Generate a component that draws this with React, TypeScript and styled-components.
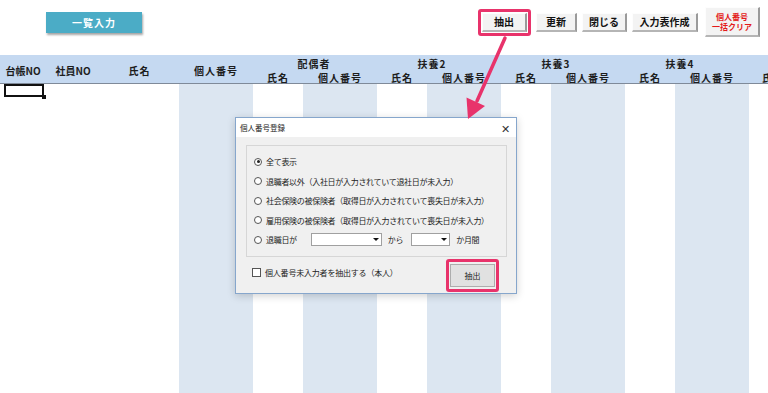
import React from 'react'
import styled, { createGlobalStyle } from 'styled-components'

const GlobalStyle = createGlobalStyle`
  html, body {
    margin: 0;
    padding: 0;
    background: #ffffff;
  }
  body {
    font-family: 'Noto Sans CJK JP', 'Noto Sans', sans-serif;
    color: #222;
  }
`

const PINK = '#e8336b'
const COLS = [46, 54, 79, 74, 50, 74, 50, 74, 50, 74, 50, 74, 19]
const SHADED = [3, 5, 7, 9, 11]
const GROUPS = [
  { label: '配偶者', shift: 2 },
  { label: '扶養2', shift: 14 },
  { label: '扶養3', shift: 14 },
  { label: '扶養4', shift: 14 },
]

const Sheet = styled.div`
  position: relative;
  width: 768px;
  height: 393px;
  overflow: hidden;
  background: #fff;
  display: flex;
  flex-direction: column;
`

const TopBar = styled.div`
  height: 55px;
  display: flex;
  align-items: flex-start;
  padding: 0 8px 0 46px;
  box-sizing: border-box;
`

const TealButton = styled.div`
  margin-top: 12px;
  width: 96px;
  height: 21px;
  background: #4bacc6;
  box-shadow: 1px 2px 2px rgba(0, 0, 0, 0.35);
  color: #fff;
  font-size: 10px;
  font-weight: 700;
  display: flex;
  align-items: center;
  justify-content: center;
  letter-spacing: 1px;
`

const ButtonGroup = styled.div`
  margin-left: auto;
  margin-top: 7px;
  height: 30px;
  display: flex;
  align-items: center;
  gap: 5px;
`

const Highlight = styled.div<{ $px: number; $py: number }>`
  border: 3px solid ${PINK};
  border-radius: 3px;
  padding: ${(p) => p.$py}px ${(p) => p.$px}px;
  display: flex;
`

const FormButton = styled.div<{ $w: number; $h?: number; $red?: boolean }>`
  width: ${(p) => p.$w}px;
  height: ${(p) => p.$h || 19}px;
  box-sizing: border-box;
  background: #f3f3f3;
  border-right: 2px solid #9a9a9a;
  border-bottom: 2px solid #b5b5b5;
  border-top: 1px solid #fdfdfd;
  border-left: 1px solid #fdfdfd;
  color: ${(p) => (p.$red ? '#e31b1b' : '#111')};
  font-size: ${(p) => (p.$red ? 8 : 10)}px;
  font-weight: 700;
  line-height: ${(p) => (p.$red ? 1.2 : 1)};
  display: flex;
  flex-direction: column;
  align-items: center;
  justify-content: center;
  text-align: center;
  white-space: nowrap;
`

const ClearButton = styled(FormButton)`
  margin-left: 2px;
`

const Header = styled.div`
  height: 28px;
  background: #c5d9f1;
  border-bottom: 1px solid #7f8a99;
  display: grid;
  grid-template-columns: ${COLS.map((c) => c + 'px').join(' ')};
  grid-template-rows: 14px 14px;
  font-size: 10px;
  font-weight: 700;
  color: #1d1d1d;
`

const HeadCell = styled.div<{ $col: number; $span?: number; $row: string; $tight?: boolean }>`
  grid-column: ${(p) => p.$col} / span ${(p) => p.$span || 1};
  grid-row: ${(p) => p.$row};
  display: flex;
  align-items: center;
  justify-content: center;
  white-space: nowrap;
  letter-spacing: ${(p) => (p.$tight ? 0 : 1)}px;
  padding-top: 2px;
`

const GroupCell = styled(HeadCell)<{ $shift: number }>`
  padding-right: ${(p) => p.$shift}px;
`

const EdgeCell = styled(HeadCell)`
  justify-content: flex-start;
  padding-left: 13px;
`

const Body = styled.div`
  flex: 1;
  position: relative;
  display: grid;
  grid-template-columns: ${COLS.map((c) => c + 'px').join(' ')};
`

const Column = styled.div<{ $shaded: boolean }>`
  background: ${(p) => (p.$shaded ? '#dce6f1' : '#ffffff')};
`

const Cursor = styled.div`
  position: absolute;
  left: 4px;
  top: 0;
  width: 40px;
  height: 13px;
  box-sizing: border-box;
  border: 2px solid #111;
  &::after {
    content: '';
    position: absolute;
    right: -4px;
    bottom: -4px;
    width: 4px;
    height: 4px;
    background: #111;
  }
`

const Dialog = styled.div`
  position: absolute;
  left: 235px;
  top: 117px;
  width: 282px;
  height: 177px;
  box-sizing: border-box;
  border: 1px solid #86a6cc;
  background: #f0f0f0;
  box-shadow: 0 2px 8px rgba(0, 0, 0, 0.18);
  display: flex;
  flex-direction: column;
  font-size: 8px;
  color: #222;
`

const TitleBar = styled.div`
  height: 19px;
  background: #fff;
  display: flex;
  align-items: center;
  justify-content: space-between;
  padding: 0 6px 0 4px;
  font-size: 7.5px;
`

const Close = styled.span`
  font-size: 11px;
  font-weight: 300;
  color: #333;
`

const GroupBox = styled.div`
  margin: 8px 9px 0 10px;
  height: 112px;
  box-sizing: border-box;
  border: 1px solid #d6d6d6;
  padding: 6px 0 0 7px;
  display: flex;
  flex-direction: column;
`

const OptionRow = styled.div`
  height: 19.5px;
  display: flex;
  align-items: center;
  gap: 4px;
  white-space: nowrap;
  letter-spacing: -0.3px;
`

const SelectRow = styled(OptionRow)`
  gap: 0;
`

const Gap = styled.span<{ $w: number }>`
  display: inline-block;
  width: ${(p) => p.$w}px;
`

const Radio = styled.span<{ $on?: boolean }>`
  width: 6px;
  height: 6px;
  border-radius: 50%;
  border: 1px solid #555;
  background: #fff;
  display: inline-flex;
  align-items: center;
  justify-content: center;
  &::after {
    content: '';
    width: 3px;
    height: 3px;
    border-radius: 50%;
    background: ${(p) => (p.$on ? '#222' : 'transparent')};
  }
`

const Select = styled.div<{ $w: number }>`
  width: ${(p) => p.$w}px;
  height: 13px;
  box-sizing: border-box;
  border: 1px solid #a0a0a0;
  background: #fff;
  display: flex;
  justify-content: flex-end;
  align-items: center;
  padding-right: 2px;
  &::after {
    content: '';
    border-left: 3px solid transparent;
    border-right: 3px solid transparent;
    border-top: 3px solid #111;
  }
`

const Footer = styled.div`
  flex: 1;
  display: flex;
  align-items: center;
  padding: 0 0 0 16px;
`

const CheckRow = styled.div`
  display: flex;
  align-items: center;
  gap: 4px;
  letter-spacing: -0.2px;
  margin-top: -6px;
`

const Checkbox = styled.span`
  width: 7px;
  height: 7px;
  border: 1px solid #555;
  background: #fff;
`

const DialogButton = styled.div`
  width: 45px;
  height: 23px;
  box-sizing: border-box;
  background: #e1e1e1;
  border: 1px solid #adadad;
  display: flex;
  align-items: center;
  justify-content: center;
  font-size: 8px;
`

const DialogHighlight = styled(Highlight)`
  margin-left: auto;
  margin-right: 17px;
  margin-top: 1px;
`

const Arrow = styled.svg`
  position: absolute;
  left: 0;
  top: 0;
  pointer-events: none;
`

export default function App() {
  return (
    <Sheet>
      <GlobalStyle />
      <TopBar>
        <TealButton>一覧入力</TealButton>
        <ButtonGroup>
          <Highlight $px={1} $py={1}>
            <FormButton $w={45}>抽出</FormButton>
          </Highlight>
          <FormButton $w={41}>更新</FormButton>
          <FormButton $w={45}>閉じる</FormButton>
          <FormButton $w={66}>入力表作成</FormButton>
          <ClearButton $w={55} $h={30} $red>
            <span>個人番号</span>
            <span>一括クリア</span>
          </ClearButton>
        </ButtonGroup>
      </TopBar>

      <Header>
        <HeadCell $col={1} $row="1 / span 2" $tight>台帳NO</HeadCell>
        <HeadCell $col={2} $row="1 / span 2" $tight>社員NO</HeadCell>
        <HeadCell $col={3} $row="1 / span 2">氏名</HeadCell>
        <HeadCell $col={4} $row="1 / span 2">個人番号</HeadCell>
        {GROUPS.map((g, i) => (
          <React.Fragment key={g.label}>
            <GroupCell $col={5 + i * 2} $span={2} $row="1" $shift={g.shift}>
              {g.label}
            </GroupCell>
            <HeadCell $col={5 + i * 2} $row="2">氏名</HeadCell>
            <HeadCell $col={6 + i * 2} $row="2">個人番号</HeadCell>
          </React.Fragment>
        ))}
        <EdgeCell $col={13} $row="2">氏</EdgeCell>
      </Header>

      <Body>
        {COLS.map((_, i) => (
          <Column key={i} $shaded={SHADED.includes(i)} />
        ))}
        <Cursor />
      </Body>

      <Dialog>
        <TitleBar>
          <span>個人番号登録</span>
          <Close>✕</Close>
        </TitleBar>
        <GroupBox>
          <OptionRow>
            <Radio $on />
            全て表示
          </OptionRow>
          <OptionRow>
            <Radio />
            退職者以外（入社日が入力されていて退社日が未入力）
          </OptionRow>
          <OptionRow>
            <Radio />
            社会保険の被保険者（取得日が入力されていて喪失日が未入力）
          </OptionRow>
          <OptionRow>
            <Radio />
            雇用保険の被保険者（取得日が入力されていて喪失日が未入力）
          </OptionRow>
          <SelectRow>
            <Radio />
            <Gap $w={4} />
            退職日が
            <Gap $w={14} />
            <Select $w={71} />
            <Gap $w={6} />
            から
            <Gap $w={8} />
            <Select $w={39} />
            <Gap $w={6} />
            か月間
          </SelectRow>
        </GroupBox>
        <Footer>
          <CheckRow>
            <Checkbox />
            個人番号未入力者を抽出する（本人）
          </CheckRow>
          <DialogHighlight $px={1} $py={2}>
            <DialogButton>抽出</DialogButton>
          </DialogHighlight>
        </Footer>
      </Dialog>

      <Arrow width="768" height="393" viewBox="0 0 768 393">
        <line x1="505" y1="38" x2="477" y2="101" stroke={PINK} strokeWidth="3.5" strokeLinecap="round" />
        <polygon points="468,119 466.5,97.5 485,106" fill={PINK} />
      </Arrow>
    </Sheet>
  )
}
